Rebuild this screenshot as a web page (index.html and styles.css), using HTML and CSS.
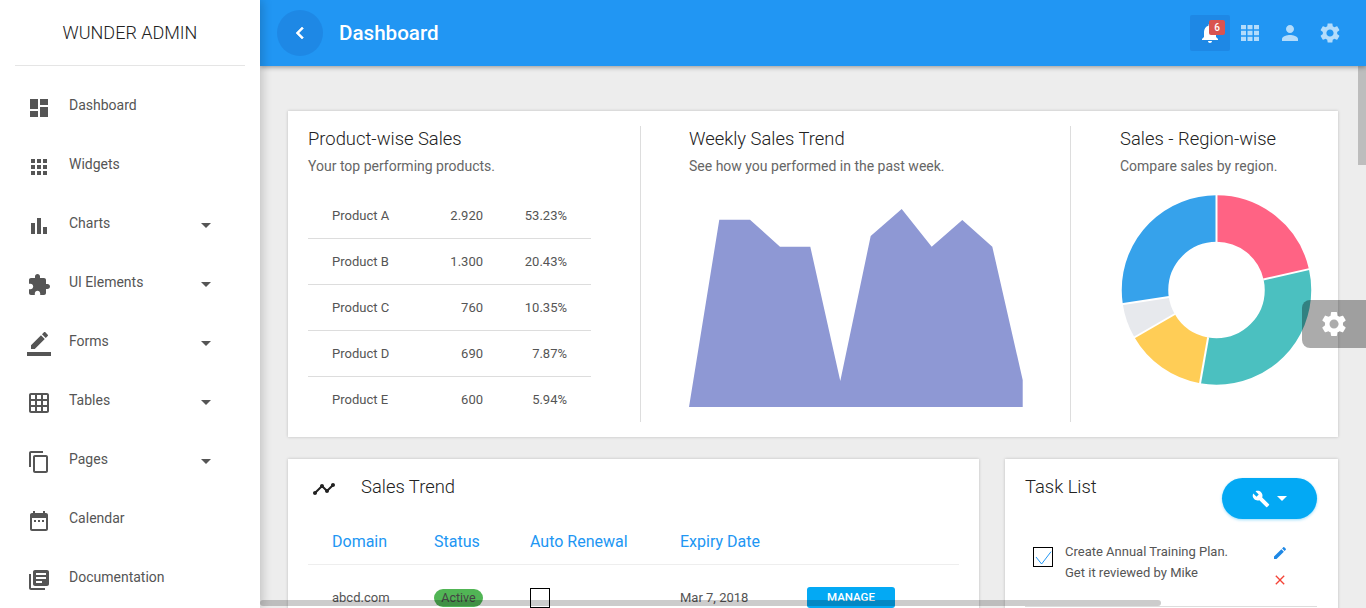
FILE: index.html
```html
<!DOCTYPE html>
<html lang="en">
<head>
<meta charset="utf-8">
<title>Wunder Admin - Dashboard</title>
<link rel="stylesheet" href="styles.css">
</head>
<body>
<svg class="sprite" xmlns="http://www.w3.org/2000/svg">
  <symbol id="i-dashboard" viewBox="0 0 24 24"><path d="M3 13h8V3H3v10zm0 8h8v-6H3v6zm10 0h8V11h-8v10zm0-18v6h8V3h-8z"/></symbol>
  <symbol id="i-apps" viewBox="0 0 24 24"><path d="M4 8h4V4H4v4zm6 12h4v-4h-4v4zm-6 0h4v-4H4v4zm0-6h4v-4H4v4zm6 0h4v-4h-4v4zm6-10v4h4V4h-4zm-6 4h4V4h-4v4zm6 6h4v-4h-4v4zm0 6h4v-4h-4v4z"/></symbol>
  <symbol id="i-comfy" viewBox="0 0 24 24"><path d="M3 4h5v4.3H3zM9.5 4h5v4.3h-5zM16 4h5v4.3h-5zM3 9.85h5v4.3H3zM9.5 9.85h5v4.3h-5zM16 9.85h5v4.3h-5zM3 15.7h5V20H3zM9.5 15.7h5V20h-5zM16 15.7h5V20h-5z"/></symbol>
  <symbol id="i-chart" viewBox="0 0 24 24"><path d="M4 9h4v11H4zm12 4h4v7h-4zm-6-9h4v16h-4z"/></symbol>
  <symbol id="i-ext" viewBox="0 0 24 24"><path d="M20.5 11H19V7c0-1.1-.9-2-2-2h-4V3.5C13 2.12 11.88 1 10.5 1S8 2.12 8 3.5V5H4c-1.1 0-1.99.9-1.99 2v3.8H3.5c1.49 0 2.7 1.21 2.7 2.7s-1.21 2.7-2.7 2.7H2V20c0 1.1.9 2 2 2h3.8v-1.5c0-1.49 1.21-2.7 2.7-2.7 1.49 0 2.7 1.21 2.7 2.7V22H17c1.1 0 2-.9 2-2v-4h1.5c1.38 0 2.5-1.12 2.5-2.5S21.88 11 20.5 11z"/></symbol>
  <symbol id="i-border" viewBox="0 0 24 24"><path d="M17.75 7L14 3.25l-10 10V17h3.75l10-10zm2.96-2.96c.39-.39.39-1.02 0-1.41L18.37.29c-.39-.39-1.02-.39-1.41 0L15 2.25 18.75 6l1.96-1.96z"/><path d="M0 20h24v4H0z"/></symbol>
  <symbol id="i-grid" viewBox="0 0 24 24"><path d="M20 2H4c-1.1 0-2 .9-2 2v16c0 1.1.9 2 2 2h16c1.1 0 2-.9 2-2V4c0-1.1-.9-2-2-2zM8 20H4v-4h4v4zm0-6H4v-4h4v4zm0-6H4V4h4v4zm6 12h-4v-4h4v4zm0-6h-4v-4h4v4zm0-6h-4V4h4v4zm6 12h-4v-4h4v4zm0-6h-4v-4h4v4zm0-6h-4V4h4v4z"/></symbol>
  <symbol id="i-copy" viewBox="0 0 24 24"><path d="M16 1H4c-1.1 0-2 .9-2 2v14h2V3h12V1zm3 4H8c-1.1 0-2 .9-2 2v14c0 1.1.9 2 2 2h11c1.1 0 2-.9 2-2V7c0-1.1-.9-2-2-2zm0 16H8V7h11v14z"/></symbol>
  <symbol id="i-date" viewBox="0 0 24 24"><path d="M9 11H7v2h2v-2zm4 0h-2v2h2v-2zm4 0h-2v2h2v-2zm2-7h-1V2h-2v2H8V2H6v2H5c-1.11 0-1.99.9-1.99 2L3 20c0 1.1.89 2 2 2h14c1.1 0 2-.9 2-2V6c0-1.1-.9-2-2-2zm0 16H5V9h14v11z"/></symbol>
  <symbol id="i-books" viewBox="0 0 24 24"><path d="M4 6H2v14c0 1.1.9 2 2 2h14v-2H4V6zm16-4H8c-1.1 0-2 .9-2 2v12c0 1.1.9 2 2 2h12c1.1 0 2-.9 2-2V4c0-1.1-.9-2-2-2zm-1 9H9V9h10v2zm-4 4H9v-2h6v2zm4-8H9V5h10v2z"/></symbol>
  <symbol id="i-bell" viewBox="0 0 24 24"><path d="M12 22c1.1 0 2-.9 2-2h-4c0 1.1.89 2 2 2zm6-6v-5c0-3.07-1.64-5.64-4.5-6.32V4c0-.83-.67-1.5-1.5-1.5s-1.5.67-1.5 1.5v.68C7.63 5.36 6 7.92 6 11v5l-2 2v1h16v-1l-2-2z"/></symbol>
  <symbol id="i-person" viewBox="0 0 24 24"><path d="M12 12c2.21 0 4-1.79 4-4s-1.79-4-4-4-4 1.79-4 4 1.79 4 4 4zm0 2c-2.67 0-8 1.34-8 4v2h16v-2c0-2.66-5.33-4-8-4z"/></symbol>
  <symbol id="i-gear" viewBox="0 0 24 24"><path d="M19.14 12.94c.04-.3.06-.61.06-.94 0-.32-.02-.64-.07-.94l2.03-1.58c.18-.14.23-.41.12-.61l-1.92-3.32c-.12-.22-.37-.29-.59-.22l-2.39.96c-.5-.38-1.03-.7-1.62-.94l-.36-2.54c-.04-.24-.24-.41-.48-.41h-3.84c-.24 0-.43.17-.47.41l-.36 2.54c-.59.24-1.13.57-1.62.94l-2.39-.96c-.22-.08-.47 0-.59.22L2.74 8.87c-.12.21-.08.47.12.61l2.03 1.58c-.05.3-.09.63-.09.94s.02.64.07.94l-2.03 1.58c-.18.14-.23.41-.12.61l1.92 3.32c.12.22.37.29.59.22l2.39-.96c.5.38 1.03.7 1.62.94l.36 2.54c.05.24.24.41.48.41h3.84c.24 0 .44-.17.47-.41l.36-2.54c.59-.24 1.13-.56 1.62-.94l2.39.96c.22.08.47 0 .59-.22l1.92-3.32c.12-.22.07-.47-.12-.61l-2.01-1.58zM12 15.6c-1.98 0-3.6-1.62-3.6-3.6s1.62-3.6 3.6-3.6 3.6 1.62 3.6 3.6-1.62 3.6-3.6 3.6z"/></symbol>
  <symbol id="i-timeline" viewBox="0 0 24 24"><path d="M23 8c0 1.1-.9 2-2 2-.18 0-.35-.02-.51-.07l-3.56 3.55c.05.16.07.34.07.52 0 1.1-.9 2-2 2s-2-.9-2-2c0-.18.02-.36.07-.52l-2.55-2.55c-.16.05-.34.07-.52.07s-.36-.02-.52-.07l-4.55 4.56c.05.16.07.33.07.51 0 1.1-.9 2-2 2s-2-.9-2-2 .9-2 2-2c.18 0 .35.02.51.07l4.56-4.55C8.02 9.36 8 9.18 8 9c0-1.1.9-2 2-2s2 .9 2 2c0 .18-.02.36-.07.52l2.55 2.55c.16-.05.34-.07.52-.07s.36.02.52.07l3.55-3.56C19.02 8.35 19 8.18 19 8c0-1.1.9-2 2-2s2 .9 2 2z"/></symbol>
  <symbol id="i-build" viewBox="0 0 24 24"><path d="M22.7 19l-9.1-9.1c.9-2.3.4-5-1.5-6.9-2-2-5-2.4-7.4-1.3L9 6 6 9 1.6 4.7C.4 7.1.9 10.1 2.9 12.1c1.9 1.9 4.6 2.4 6.9 1.5l9.1 9.1c.4.4 1 .4 1.4 0l2.3-2.3c.5-.4.5-1.1.1-1.4z"/></symbol>
  <symbol id="i-edit" viewBox="0 0 24 24"><path d="M3 17.25V21h3.75L17.81 9.94l-3.75-3.75L3 17.25zM20.71 7.04c.39-.39.39-1.02 0-1.41l-2.34-2.34c-.39-.39-1.02-.39-1.41 0l-1.83 1.83 3.75 3.75 1.83-1.83z"/></symbol>
  <symbol id="i-close" viewBox="0 0 24 24"><path d="M19 6.41L17.59 5 12 10.59 6.41 5 5 6.41 10.59 12 5 17.59 6.41 19 12 13.41 17.59 19 19 17.59 13.41 12z"/></symbol>
  <symbol id="i-back" viewBox="0 0 24 24"><path d="M15.41 7.41L14 6l-6 6 6 6 1.41-1.41L10.83 12z"/></symbol>
</svg>

<div class="app">
  <aside class="sidebar">
    <div class="brand">WUNDER ADMIN</div>
    <nav class="nav">
      <a class="nav-item"><svg class="nav-icon"><use href="#i-dashboard"/></svg><span class="nav-label">Dashboard</span></a>
      <a class="nav-item"><svg class="nav-icon"><use href="#i-apps"/></svg><span class="nav-label">Widgets</span></a>
      <a class="nav-item"><svg class="nav-icon"><use href="#i-chart"/></svg><span class="nav-label">Charts</span><i class="caret"></i></a>
      <a class="nav-item"><svg class="nav-icon"><use href="#i-ext"/></svg><span class="nav-label">UI Elements</span><i class="caret"></i></a>
      <a class="nav-item"><svg class="nav-icon"><use href="#i-border"/></svg><span class="nav-label">Forms</span><i class="caret"></i></a>
      <a class="nav-item"><svg class="nav-icon"><use href="#i-grid"/></svg><span class="nav-label">Tables</span><i class="caret"></i></a>
      <a class="nav-item"><svg class="nav-icon"><use href="#i-copy"/></svg><span class="nav-label">Pages</span><i class="caret"></i></a>
      <a class="nav-item"><svg class="nav-icon"><use href="#i-date"/></svg><span class="nav-label">Calendar</span></a>
      <a class="nav-item"><svg class="nav-icon"><use href="#i-books"/></svg><span class="nav-label">Documentation</span></a>
    </nav>
  </aside>

  <div class="main">
    <header class="topbar">
      <button class="back"><svg class="back-icon"><use href="#i-back"/></svg></button>
      <h1 class="page-title">Dashboard</h1>
      <div class="top-actions">
        <div class="top-btn active">
          <svg class="top-icon bell"><use href="#i-bell"/></svg>
          <span class="badge">6</span>
        </div>
        <div class="top-btn"><svg class="top-icon"><use href="#i-comfy"/></svg></div>
        <div class="top-btn"><svg class="top-icon"><use href="#i-person"/></svg></div>
        <div class="top-btn"><svg class="top-icon"><use href="#i-gear"/></svg></div>
      </div>
    </header>

    <main class="content">
      <section class="card overview">
        <div class="col col-products">
          <h2 class="card-title">Product-wise Sales</h2>
          <p class="card-sub">Your top performing products.</p>
          <div class="prod-table">
            <div class="prod-row"><span>Product A</span><span class="num">2.920</span><span class="num">53.23%</span></div>
            <div class="prod-row"><span>Product B</span><span class="num">1.300</span><span class="num">20.43%</span></div>
            <div class="prod-row"><span>Product C</span><span class="num">760</span><span class="num">10.35%</span></div>
            <div class="prod-row"><span>Product D</span><span class="num">690</span><span class="num">7.87%</span></div>
            <div class="prod-row"><span>Product E</span><span class="num">600</span><span class="num">5.94%</span></div>
          </div>
        </div>
        <div class="vline vline-a"></div>
        <div class="col col-weekly">
          <h2 class="card-title">Weekly Sales Trend</h2>
          <p class="card-sub">See how you performed in the past week.</p>
          <svg class="area-chart" viewBox="689 192 334 230">
            <polygon fill="#8e98d4" points="689,407 719.3,219.7 750,219.7 780,246.7 810.3,246.7 840.3,381 870.7,236 901.7,209 931.7,246.7 962.3,220 992.3,246.7 1022.7,380 1022.7,407"/>
          </svg>
        </div>
        <div class="vline vline-b"></div>
        <div class="col col-region">
          <h2 class="card-title">Sales - Region-wise</h2>
          <p class="card-sub">Compare sales by region.</p>
          <svg class="donut" viewBox="1120 192 200 200">
            <g fill="none" stroke-width="46.5" transform="rotate(-90 1216.5 290)">
              <circle cx="1216.5" cy="290" r="71.5" pathLength="360" stroke="#ff6384" stroke-dasharray="77.3 282.7"/>
              <circle cx="1216.5" cy="290" r="71.5" pathLength="360" stroke="#4bc0c0" stroke-dasharray="112.7 247.3" stroke-dashoffset="-77.3"/>
              <circle cx="1216.5" cy="290" r="71.5" pathLength="360" stroke="#ffcd56" stroke-dasharray="50 310" stroke-dashoffset="-190"/>
              <circle cx="1216.5" cy="290" r="71.5" pathLength="360" stroke="#e7e9ed" stroke-dasharray="21.5 338.5" stroke-dashoffset="-240"/>
              <circle cx="1216.5" cy="290" r="71.5" pathLength="360" stroke="#36a2eb" stroke-dasharray="98.5 261.5" stroke-dashoffset="-261.5"/>
            </g>
            <g stroke="#fff" stroke-width="2">
              <line x1="1216.5" y1="242" x2="1216.5" y2="194" transform="rotate(0 1216.5 290)"/>
              <line x1="1216.5" y1="242" x2="1216.5" y2="194" transform="rotate(77.3 1216.5 290)"/>
              <line x1="1216.5" y1="242" x2="1216.5" y2="194" transform="rotate(190 1216.5 290)"/>
              <line x1="1216.5" y1="242" x2="1216.5" y2="194" transform="rotate(240 1216.5 290)"/>
              <line x1="1216.5" y1="242" x2="1216.5" y2="194" transform="rotate(261.5 1216.5 290)"/>
            </g>
          </svg>
        </div>
      </section>

      <div class="lower">
        <section class="card trend">
          <div class="trend-head">
            <svg class="trend-icon"><use href="#i-timeline"/></svg>
            <h2 class="card-title">Sales Trend</h2>
          </div>
          <div class="domain-row domain-head">
            <span>Domain</span><span>Status</span><span>Auto Renewal</span><span>Expiry Date</span>
          </div>
          <div class="domain-row domain-body">
            <span>abcd.com</span>
            <span class="pill">Active</span>
            <span class="box"></span>
            <span>Mar 7, 2018</span>
            <button class="manage">MANAGE</button>
          </div>
        </section>

        <section class="card tasks">
          <div class="tasks-head">
            <h2 class="card-title">Task List</h2>
            <button class="tool-btn"><svg class="tool-icon"><use href="#i-build"/></svg><i class="caret caret-white"></i></button>
          </div>
          <div class="task">
            <span class="box box-checked">
              <svg class="tick" viewBox="0 0 18 18"><polyline points="2,9 7.6,16 17,3.7" fill="none" stroke="#2196f3" stroke-width="1"/></svg>
            </span>
            <p class="task-text">Create Annual Training Plan.<br>Get it reviewed by Mike</p>
            <div class="task-actions">
              <svg class="task-icon edit"><use href="#i-edit"/></svg>
              <svg class="task-icon remove"><use href="#i-close"/></svg>
            </div>
          </div>
        </section>
      </div>
    </main>
  </div>

  <div class="float-settings"><svg class="float-icon"><use href="#i-gear"/></svg></div>
  <div class="scroll-v"></div>
  <div class="scroll-h"></div>
</div>
</body>
</html>
```

FILE: styles.css
```css
* { box-sizing: border-box; }
html, body { height: 100%; }
body {
  margin: 0;
  overflow: hidden;
  font-family: Roboto, "Liberation Sans", sans-serif;
  color: #555;
  background: #ededed;
}
h1, h2, p { margin: 0; font-weight: 400; }
button { border: 0; font-family: inherit; padding: 0; }
.sprite { display: none; }

.app { position: relative; display: flex; height: 608px; overflow: hidden; }

/* Sidebar */
.sidebar {
  flex: 0 0 260px;
  background: #fff;
  box-shadow: 2px 0 10px rgba(0, 0, 0, .2);
  z-index: 3;
}
.brand {
  height: 66px;
  margin: 0 15px;
  border-bottom: 1px solid #e5e5e5;
  text-align: center;
  font-size: 18px;
  font-weight: 300;
  line-height: 66px;
  color: #222;
}
.nav { padding-top: 10px; }
.nav-item {
  display: flex;
  align-items: center;
  height: 59px;
  padding: 0 49px 0 27px;
  font-size: 14px;
  color: #555;
}
.nav-icon { width: 24px; height: 24px; margin: 4px 18px 0 0; fill: #555; flex: none; }
.nav-label { flex: 1; margin-top: -2px; }
.caret {
  width: 0;
  height: 0;
  margin-top: 4px;
  border-left: 5px solid transparent;
  border-right: 5px solid transparent;
  border-top: 5px solid #555;
}

/* Top bar */
.main { flex: 1; min-width: 0; display: flex; flex-direction: column; }
.topbar {
  flex: 0 0 66px;
  display: flex;
  align-items: center;
  padding: 0 16px 0 17px;
  background: #2196f3;
  box-shadow: 0 1px 5px rgba(0, 0, 0, .4);
  z-index: 2;
}
.back {
  width: 46px;
  height: 46px;
  border-radius: 50%;
  background: #1e88e5;
  display: flex;
  align-items: center;
  justify-content: center;
}
.back-icon { width: 24px; height: 24px; fill: #fff; stroke: #fff; stroke-width: .6; }
.page-title { margin-left: 16px; font-size: 20.6px; font-weight: 500; color: #fff; }
.top-actions { margin-left: auto; display: flex; }
.top-btn {
  position: relative;
  width: 40px;
  height: 36px;
  border-radius: 2px;
  display: flex;
  align-items: center;
  justify-content: center;
}
.top-btn.active { background: #1e88e5; }
.top-icon { width: 24px; height: 24px; fill: #b3dcfb; }
.top-icon.bell { fill: #fff; }
.badge {
  position: absolute;
  top: 5px;
  left: 19px;
  width: 16px;
  height: 15px;
  border-radius: 2px;
  background: #d9534f;
  color: #fff;
  font-size: 10px;
  font-weight: 500;
  line-height: 15px;
  text-align: center;
}

/* Content */
.content { flex: 1; min-height: 0; padding: 45px 28px 0; overflow: hidden; }
.card {
  background: #fff;
  box-shadow: 0 0 3px rgba(0, 0, 0, .2);
}
.card-title { font-size: 18.4px; font-weight: 300; line-height: 26px; color: #222; }
.card-sub { margin-top: 4px; font-size: 14px; line-height: 20px; color: #666; }

.overview { display: flex; padding: 15px 0 15px 20px; height: 326px; }
.col-products { flex: 0 0 283px; }
.col-weekly { flex: 0 0 334px; }
.col-region { flex: 1; }
.vline { flex: 0 0 1px; background: #ddd; }
.vline-a { margin: 0 48px 0 49px; }
.vline-b { margin: 0 49px 0 47px; }

.prod-table { margin-top: 17px; }
.prod-row {
  display: grid;
  grid-template-columns: 1fr 60px 84px;
  align-items: center;
  height: 46px;
  padding: 0 24px;
  border-bottom: 1px solid #ddd;
  font-size: 13px;
  color: #555;
}
.prod-row:last-child { height: 45px; border-bottom: 0; }
.num { text-align: right; }

.area-chart { display: block; margin-top: 16px; width: 334px; height: 230px; }
.donut { display: block; margin-top: 16px; width: 200px; height: 200px; }

/* Lower row */
.lower { display: flex; gap: 26px; margin-top: 22px; }
.trend { flex: 0 0 691px; height: 240px; padding: 0 20px; }
.tasks { flex: 1; height: 240px; padding: 15px 21px 0 20px; }

.trend-head { display: flex; align-items: center; height: 56px; padding-left: 4px; }
.trend-icon { width: 24px; height: 24px; margin: 4px 25px 0 0; fill: #222; flex: none; }

.domain-row {
  display: grid;
  grid-template-columns: 102px 96px 150px 127px 88px;
  padding-left: 24px;
  align-items: center;
}
.domain-head {
  height: 50px;
  padding-top: 4px;
  border-bottom: 1px solid #eee;
  font-size: 16px;
  color: #2196f3;
}
.domain-body { padding-top: 22px; font-size: 13px; color: #555; }
.pill {
  justify-self: start;
  width: 49px;
  height: 18px;
  border-radius: 9px;
  background: #51b555;
  line-height: 18px;
  text-align: center;
  font-size: 12.5px;
  color: #444;
}
.box {
  display: block;
  width: 20px;
  height: 20px;
  border: 1px solid #000;
  flex: none;
}
.manage {
  width: 88px;
  height: 21px;
  padding-bottom: 2px;
  border-radius: 3px;
  background: #03a9f4;
  color: #fff;
  font-size: 11.5px;
  font-weight: 500;
}

.tasks-head { display: flex; justify-content: space-between; align-items: flex-start; }
.tool-btn {
  width: 95px;
  height: 41px;
  margin-top: 4px;
  border-radius: 21px;
  background: #03a9f4;
  box-shadow: 0 1px 3px rgba(3, 169, 244, .4);
  display: flex;
  align-items: center;
  justify-content: center;
  gap: 7px;
}
.tool-icon { width: 18px; height: 18px; fill: #fff; }
.caret-white { margin-top: 0; border-top-color: #fff; }

.task {
  display: flex;
  margin-top: 22px;
  height: 66px;
  padding-left: 8px;
  border-bottom: 1px solid #ddd;
}
.box-checked { margin: 6px 12px 0 0; }
.tick { display: block; width: 18px; height: 18px; }
.task-text { font-size: 13px; line-height: 21px; color: #555; }
.task-actions { margin-left: auto; padding: 4px 29px 0 0; display: flex; flex-direction: column; gap: 11px; }
.task-icon { display: block; width: 16px; height: 16px; }
.edit { fill: #1e88e5; }
.remove { fill: #f44336; }

/* Overlays */
.float-settings {
  position: absolute;
  top: 300px;
  right: 0;
  width: 64px;
  height: 48px;
  border-radius: 8px 0 0 8px;
  background: rgba(0, 0, 0, .33);
  display: flex;
  align-items: center;
  padding-left: 17px;
  z-index: 5;
}
.float-icon { width: 30px; height: 30px; fill: #fff; }
.scroll-v {
  position: absolute;
  top: 66px;
  right: 0;
  width: 8px;
  height: 99px;
  background: rgba(0, 0, 0, .2);
  z-index: 4;
}
.scroll-h {
  position: absolute;
  left: 260px;
  top: 600px;
  width: 901px;
  height: 6px;
  border-radius: 3px;
  background: rgba(0, 0, 0, .2);
  z-index: 4;
}
```
